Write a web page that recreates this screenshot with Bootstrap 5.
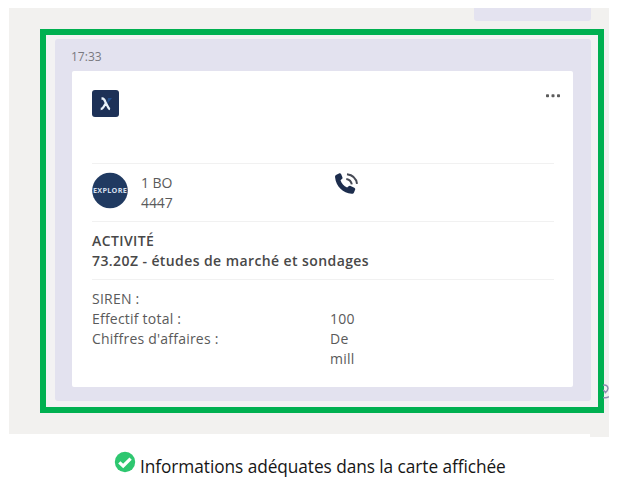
<!DOCTYPE html>
<html lang="fr">
<head>
<meta charset="utf-8">
<meta name="viewport" content="width=device-width, initial-scale=1">
<title>Carte</title>
<link href="https://cdn.jsdelivr.net/npm/bootstrap@5.3.0/dist/css/bootstrap.min.css" rel="stylesheet">
<style>
body{font-family:"Open Sans","Noto Sans",sans-serif;width:625px;height:477px;overflow:hidden;background:#fff}
.chat{margin:8px 16px 0 9px;height:426px;background:#f2f1ef;padding:21px 5px 0 31px}
.chat-foot{right:0;bottom:-3px;width:19px;height:3px;background:#f2f1ef}
.prev{left:465px;top:0;width:117px;height:13px;background:#e4e3f0;border-radius:0 0 3px 3px}
.cut{left:594px;top:375px}
.frame{height:384px;border:6px solid #00b050;padding:4px 7px 6px 9px;background:#f3f2f3}
.bubble{height:362px;background:#e3e2ef;border-radius:3px;padding:9px 18px 0 17px}
.time{font-size:12px;line-height:18px;color:#79797f;height:23px;margin-left:-1px}
.sheet{height:316px;background:#fff;border-radius:2px;padding:19px 19px 0 20px;font-size:14px;letter-spacing:.22px;line-height:20px;color:#5a5a5a}
.top-row{height:73px}
.dots{margin-right:-8px}
.sec{border-top:1px solid #f1f1f1;height:58px}
.addr{width:34px;white-space:nowrap;margin-left:13px;padding-top:9px;letter-spacing:-.1px}
.phone{margin-left:159px;margin-top:8px}
.activity{font-weight:600;color:#484848;padding-top:9px;white-space:nowrap;letter-spacing:.41px}
.facts{padding-top:9px}
.key{width:238px}
.caption{height:40px;padding:17px 0 0 114px;color:#161616;font-size:17.3px;letter-spacing:-.07px;line-height:31px;white-space:nowrap}
.caption span{margin-left:4px}
</style>
<script src="https://cdn.jsdelivr.net/npm/bootstrap@5.3.0/dist/js/bootstrap.bundle.min.js"></script>
</head>
<body>
<main class="chat position-relative">
  <div class="prev position-absolute"></div>
  <div class="chat-foot position-absolute"></div>
  <section class="frame">
    <div class="bubble">
      <div class="time">17:33</div>
      <div class="sheet">
        <div class="top-row d-flex justify-content-between align-items-start">
          <svg width="27" height="27" viewBox="0 0 27 27"><rect width="27" height="27" rx="3" fill="#1d3157"/><path d="M16 8h4l-5 6z" fill="#234f8c"/><path d="M9.500 8.500h1c1.500 0 2 1.500 3 3.700l2.500 4.800c.6 1.300 1 2 2 2.200M13.600 13.600 11.500 17c-.8 1.400-1.400 2-2.800 2" fill="none" stroke="#e8f2fb" stroke-width="2.300"/></svg>
          <svg class="dots" width="17" height="12" viewBox="0 0 17 12" fill="#5c5c5c"><rect x="1" y="4.200" width="3" height="3" rx=".8"/><rect x="6.500" y="4.200" width="3" height="3" rx=".8"/><rect x="12" y="4.200" width="3" height="3" rx=".8"/></svg>
        </div>
        <div class="sec d-flex align-items-start">
          <svg class="mt-2" width="36" height="37" viewBox="0 0 36 37"><circle cx="18" cy="18.500" r="17.800" fill="#203a61"/><text x="1" y="21.200" font-family="Open Sans,sans-serif" font-size="7" font-weight="700" textLength="34" lengthAdjust="spacingAndGlyphs" fill="#d3dfec">EXPLORE</text></svg>
          <div class="addr"><div>1 BO</div><div>4447</div></div>
          <svg class="phone" width="26" height="25" viewBox="0 0 26 25"><path d="M2.400 2.800 5 1.400c1-.5 1.800 0 2.200.9l1.200 3c.3.8.1 1.300-.5 1.800L6.500 8.300c1 3.200 3.300 5.800 6.600 7.200l1.500-1.300c.7-.6 1.200-.7 2-.3l3.700 1.800c.9.5 1.200 1.200.8 2.100l-1 2.400c-.5 1.200-1.300 1.600-2.500 1.500C9.200 21.300 2 14.200 1.100 5.400.9 4.200 1.300 3.400 2.400 2.800Z" fill="#1d2d4d"/><path d="M12.300 6.900c3 .5 5 2.400 5.500 5.500M13 2.200c5.800.7 9.200 4.300 10 9.600" fill="none" stroke="#464a55" stroke-width="2"/></svg>
        </div>
        <div class="sec activity"><div>ACTIVITÉ</div><div>73.20Z - études de marché et sondages</div></div>
        <div class="sec facts">
          <div>SIREN :</div>
          <div class="d-flex"><div class="key">Effectif total :</div><div>100</div></div>
          <div class="d-flex"><div class="key">Chiffres d'affaires :</div><div>De<br>mill</div></div>
        </div>
      </div>
    </div>
  </section>
  <svg class="cut position-absolute" width="6" height="17" viewBox="0 0 6 17"><path d="M0 2.200c3-.8 5 .6 5 3.300 0 2-1.600 3.200-3.300 4.800M0 7l2.500 2M0 14.500c2.500.6 4.500.2 6-.8" fill="none" stroke="#8f8daf" stroke-width="1.500"/></svg>
</main>
<footer class="caption d-flex align-items-start">
  <svg width="22" height="22" viewBox="0 0 22 22"><circle cx="11" cy="11" r="10.200" fill="#2ec770"/><path d="m5.300 11.300 3.900 3.700 7.400-7.400" fill="none" stroke="#fff" stroke-width="3.200"/></svg>
  <span>Informations adéquates dans la carte affichée</span>
</footer>
</body>
</html>
